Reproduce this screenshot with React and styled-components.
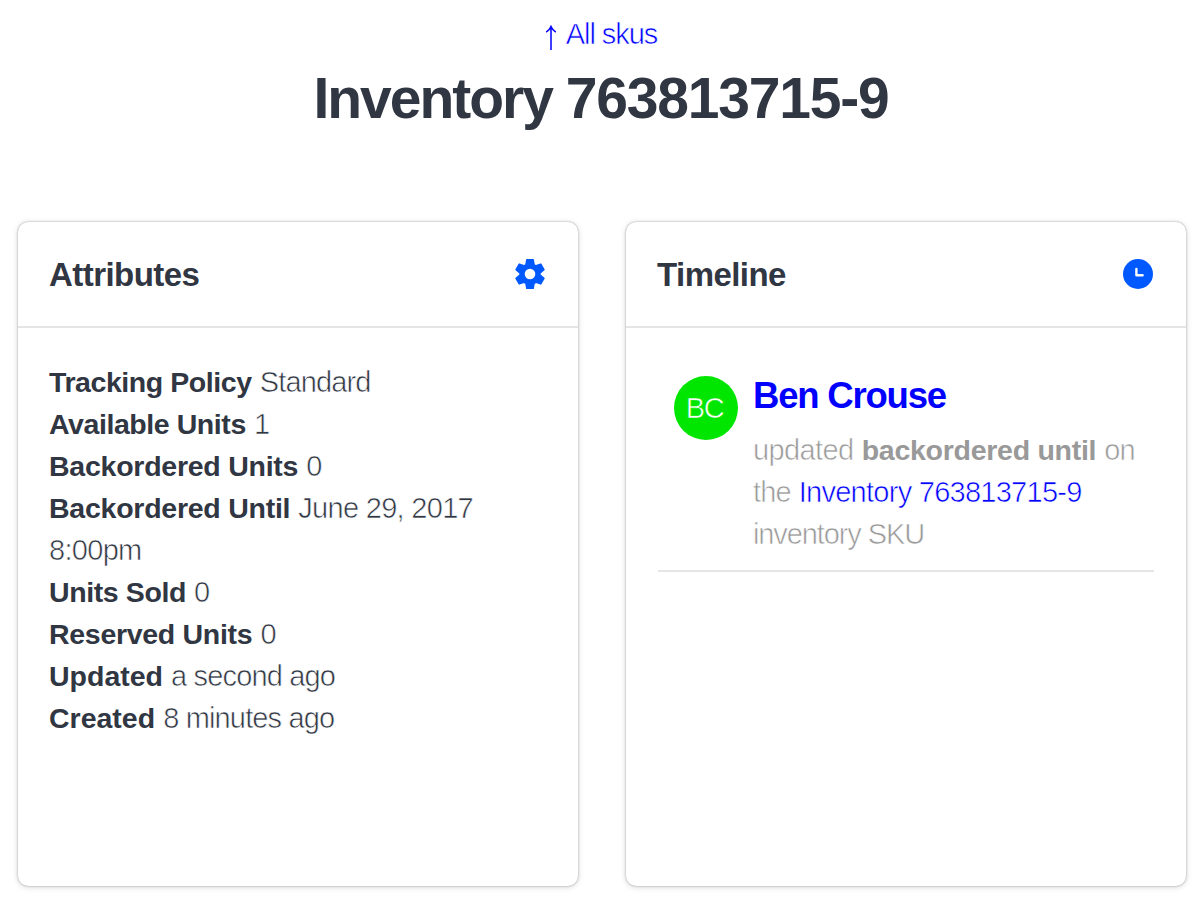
import React from "react";
import styled, { createGlobalStyle } from "styled-components";

const GlobalStyle = createGlobalStyle`
  * { box-sizing: border-box; }
  body {
    margin: 0;
    background: #fff;
    color: #303642;
    font-family: "Liberation Sans", Arial, sans-serif;
    font-size: 29px;
    line-height: 42px;
  }
  h1, h2, h3, p, ul { margin: 0; padding: 0; }
`;

const Page = styled.main`
  width: 1202px;
  height: 900px;
  overflow: hidden;
  display: flex;
  flex-direction: column;
`;

const PageHeader = styled.header`
  height: 222px;
  padding-top: 13px;
  display: flex;
  flex-direction: column;
  align-items: center;
`;

/* A thin outline in the ground colour gives the regular face a light weight. */
const Light = styled.span`
  letter-spacing: ${(p) => p.$track || 0}px;
  -webkit-text-stroke: 0.6px ${(p) => p.$ground || "#fff"};
`;

const Strong = styled.strong`
  font-weight: 700;
  font-size: 28.5px;
  letter-spacing: ${(p) => p.$track || 0}px;
`;

const Link = styled.a`
  color: #0000ff;
  text-decoration: none;
`;

const BackLink = styled(Link)`
  display: flex;
  align-items: center;
  gap: 9px;
`;

const ArrowIcon = styled.svg`
  width: 12px;
  height: 26px;
  margin-top: 8px;
`;

const Title = styled.h1`
  margin-top: 11px;
  font-size: 57px;
  line-height: 64px;
  letter-spacing: -2px;
`;

const Sku = styled.span`
  letter-spacing: -1.2px;
`;

const Cards = styled.div`
  display: grid;
  grid-template-columns: 560px 560px;
  gap: 48px;
  padding: 0 16px 0 18px;
`;

const Card = styled.section`
  height: 664px;
  border-radius: 10px;
  background: #fff;
  box-shadow: 0 0 2px rgba(0, 0, 0, 0.36), 0 1px 6px rgba(0, 0, 0, 0.16);
`;

const CardHeader = styled.div`
  display: flex;
  align-items: center;
  justify-content: space-between;
  height: 106px;
  padding: 0 30px 0 31px;
  border-bottom: 2px solid #e5e5e5;
`;

const CardTitle = styled.h2`
  padding-top: 2px;
  font-size: 33px;
  line-height: 48px;
  letter-spacing: -0.55px;
`;

const CardIcon = styled.svg`
  width: 36px;
  height: 36px;
  fill: #0059ff;
`;

const AttributeList = styled.ul`
  list-style: none;
  padding: 33px 32px 0 31px;
`;

const Timeline = styled.div`
  padding: 48px 32px 0;
`;

const Entry = styled.article`
  display: flex;
  gap: 15px;
  height: 196px;
  padding-left: 16px;
  border-bottom: 2px solid #e5e5e5;
`;

const Avatar = styled.div`
  flex: none;
  width: 64px;
  height: 64px;
  padding-right: 3px;
  border-radius: 50%;
  background: #00e600;
  color: #fff;
  line-height: 64px;
  text-align: center;
`;

const EntryBody = styled.div`
  flex: 1;
  white-space: nowrap;
`;

const Author = styled.h3`
  font-size: 36.5px;
  line-height: 40px;
  letter-spacing: -1.2px;
  margin-bottom: 13px;
`;

const Message = styled.p`
  color: #999;
`;

const toothAngles = [0, 60, 120, 180, 240, 300];

const attributes = [
  { name: "Tracking Policy", track: -0.43, value: "Standard", valueTrack: -0.85 },
  { name: "Available Units", track: -0.43, value: "1" },
  { name: "Backordered Units", track: -0.25, value: "0" },
  { name: "Backordered Until", track: -0.25, value: "June 29, 2017 8:00pm", valueTrack: -0.7 },
  { name: "Units Sold", track: -0.4, value: "0" },
  { name: "Reserved Units", track: -0.3, value: "0" },
  { name: "Updated", track: 0, value: "a second ago", valueTrack: -0.85 },
  { name: "Created", track: 0, value: "8 minutes ago", valueTrack: -0.85 },
];

export default function App() {
  return (
    <Page>
      <GlobalStyle />
      <PageHeader>
        <BackLink href="#">
          <ArrowIcon viewBox="0 0 12 26" fill="none" stroke="currentColor" strokeWidth="1.5">
            <path d="M6 25V2M1.2 7.2Q4.6 5 6 1.5Q7.4 5 10.8 7.2" />
          </ArrowIcon>
          <Light $track={-1.05}>All skus</Light>
        </BackLink>
        <Title>
          Inventory <Sku>763813715-9</Sku>
        </Title>
      </PageHeader>
      <Cards>
        <Card>
          <CardHeader>
            <CardTitle>Attributes</CardTitle>
            <CardIcon viewBox="-18 -18 36 36">
              <circle r="10.8" />
              {toothAngles.map((angle) => (
                <path
                  key={angle}
                  d="M-4.8 -9.5L-3.9 -14.4Q-3.8 -15 -3.2 -15H3.2Q3.8 -15 3.9 -14.4L4.8 -9.5Z"
                  transform={`rotate(${angle})`}
                />
              ))}
              <circle r="5.3" fill="#fff" />
            </CardIcon>
          </CardHeader>
          <AttributeList>
            {attributes.map(({ name, track, value, valueTrack }) => (
              <li key={name}>
                <Strong $track={track}>{name}</Strong> <Light $track={valueTrack}>{value}</Light>
              </li>
            ))}
          </AttributeList>
        </Card>
        <Card>
          <CardHeader>
            <CardTitle>Timeline</CardTitle>
            <CardIcon viewBox="0 0 36 36">
              <circle cx="18" cy="18" r="15" />
              <path
                d="M16.4 13v6.2h6.2"
                fill="none"
                stroke="#fff"
                strokeWidth="2.4"
                strokeLinecap="round"
                strokeLinejoin="round"
              />
            </CardIcon>
          </CardHeader>
          <Timeline>
            <Entry>
              <Avatar>
                <Light $ground="#00e600" $track={-1.3}>BC</Light>
              </Avatar>
              <EntryBody>
                <Author>
                  <Link href="#">Ben Crouse</Link>
                </Author>
                <Message>
                  <Light $track={-0.6}>updated</Light>{" "}
                  <Strong $track={-0.27}>backordered until</Strong>{" "}
                  <Light $track={-0.9}>on</Light>
                  <br />
                  <Light $track={-0.9}>the</Light>{" "}
                  <Link href="#">
                    <Light $track={-0.73}>Inventory 763813715-9</Light>
                  </Link>
                  <br />
                  <Light $track={-1.1}>inventory SKU</Light>
                </Message>
              </EntryBody>
            </Entry>
          </Timeline>
        </Card>
      </Cards>
    </Page>
  );
}
